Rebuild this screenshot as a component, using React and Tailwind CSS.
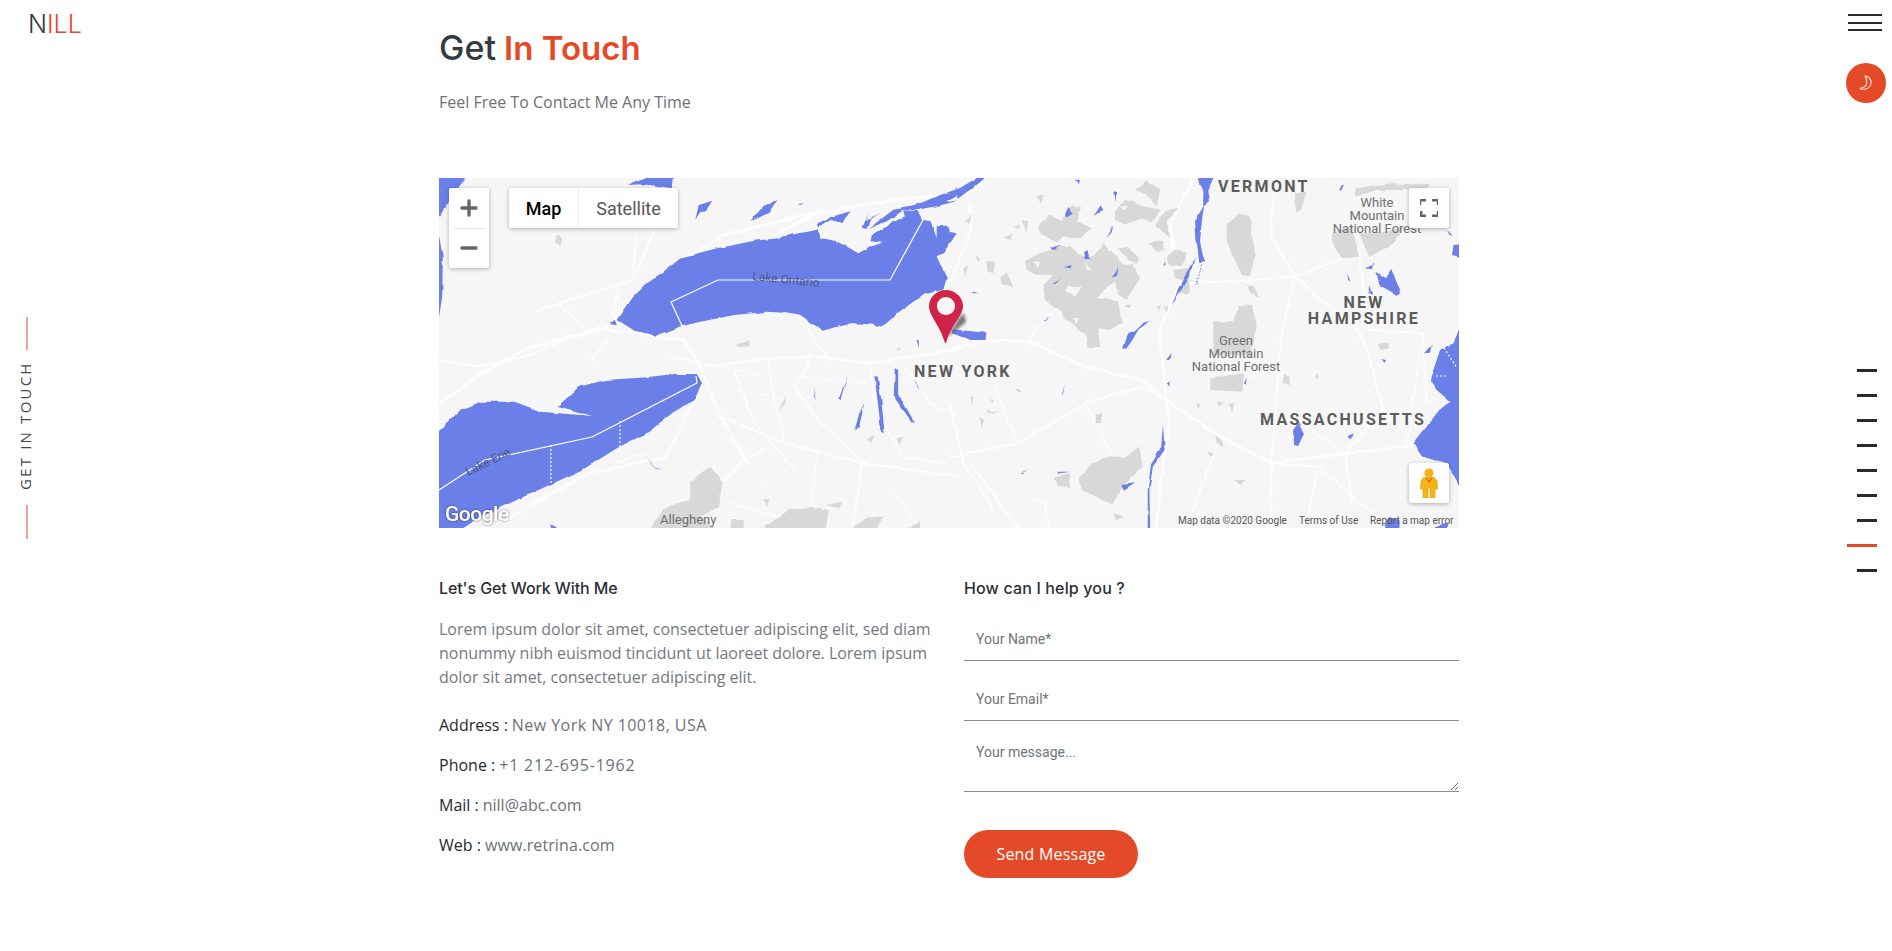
import { Plus, Minus } from 'lucide-react';

const water = "#6b80e8";
const forest = "#d8d8d8";
const land = "#f6f6f6";

// shapes are traced in zoomed-crop coordinates, each group maps its crop back onto the map
function MapLeft() {
  return (
    <g transform="translate(-9,-8) scale(0.338,0.33333)">
      <g fill="none" stroke="#ffffff" strokeOpacity="0.8" strokeLinecap="round" strokeLinejoin="round">
        <path strokeWidth="9" d="M27 700 L150 612 L300 530 L530 472 L600 390 L700 300" />
        <path strokeWidth="9" d="M700 300 L870 195 L1150 125" />
        <path strokeWidth="8" d="M820 590 L1000 565 L1150 560 L1300 580 L1525 545 L1568 540" />
        <path strokeWidth="8" d="M530 480 L750 510 L800 590 L820 640 L860 740 L940 880" />
        <path strokeWidth="6" d="M27 570 L150 590 L280 560 L500 470" />
        <path strokeWidth="6" d="M320 420 L380 400 L600 330 L660 190 L650 25" />
        <path strokeWidth="5" d="M380 400 L450 470 M560 345 L540 430 M610 200 L600 320 M480 570 L530 500" />
        <path strokeWidth="6" d="M805 640 L700 860 L470 910 L300 1000" />
        <path strokeWidth="6" d="M1130 560 L1080 650 L1130 730 L1280 880 L1250 1073" />
        <path strokeWidth="6" d="M860 740 L1050 820 L1280 880 L1568 920" />
        <path strokeWidth="5" d="M1120 480 L1180 570 M840 960 L920 880 L1000 830 M1000 565 L1020 700 L1050 820" />
        <path strokeWidth="4" d="M240 1040 L460 920 M540 880 L640 850 M880 1000 L1030 1040 M900 600 L960 760 L1080 900 M1300 580 L1320 720 L1400 860 L1520 880 M1400 580 L1480 700 L1568 740" />
        <path strokeWidth="3" d="M1100 620 L1300 640 M900 660 L1060 690 M880 800 L1000 950 M1150 800 L1130 1000 M1350 940 L1450 1073 M700 560 L1000 620" />
      </g>
      <g fill={forest}>
        <path d="M770 935 L830 890 L865 935 L855 1010 L800 1040 L850 1080 L650 1080 L690 1020 L730 1000 L770 990 Z" />
        <path d="M980 1080 L1060 1020 L1130 1010 L1180 1020 L1170 1080 Z" />
        <path d="M890 1080 L895 1050 L925 1050 L925 1080 Z" />
        <path d="M1240 1080 L1300 1040 L1340 1040 L1320 1080 Z" />
        <path d="M1400 1080 L1450 1055 L1450 1080 Z" />
        <path d="M1120 1015 L1160 1010 L1165 1025 L1125 1028 Z" />
        <path d="M1170 1005 L1220 995 L1210 1015 Z" />
        <path d="M905 525 L945 510 L945 528 L915 532 Z" />
        <path d="M1025 725 L1055 675 L1050 700 Z" />
        <path d="M1290 805 L1315 795 L1305 820 Z" />
        <path d="M1380 805 L1400 800 L1390 825 Z" />
        <path d="M985 985 L1000 985 L998 1010 Z" />
        <path d="M372 195 L388 205 L384 230 L370 220 Z" />
      </g>
      <g fill={water}>
        <path d="M555 450 L600 382 L640 342 L700 298 L745 262 L850 235 L960 212 L1045 203 L1045 428 L1000 425 L900 435 L800 455 L740 470 L670 497 L605 482 Z" />
        <path d="M530 462 L550 452 L552 466 Z" />
        <path d="M20 790 L90 720 L150 695 L250 695 L330 725 L480 738 L378 708 L410 680 L440 650 L520 630 L640 622 L720 612 L790 612 L805 640 L780 690 L720 730 L650 785 L560 830 L450 900 L300 970 L150 1040 L90 1080 L20 1080 Z" />
        <path d="M20 15 L110 15 L60 90 L27 140 L20 140 Z" />
        <path d="M20 160 L38 260 L36 380 L27 440 L20 440 Z" />
        <path d="M585 48 L660 15 L722 15 L718 55 L650 45 Z" />
        <path d="M785 150 L795 105 L835 92 L815 125 L800 125 Z" />
        <path d="M948 155 L980 115 L1028 90 L1000 130 Z" />
        <path d="M1135 650 L1145 690 L1140 680 Z" />
        <path d="M1235 620 L1215 690 L1208 690 Z" />
        <path d="M1315 618 L1325 620 L1335 690 L1345 790 L1335 785 L1325 700 Z" />
        <path d="M1375 595 L1385 600 L1385 670 L1435 760 L1425 755 L1372 680 Z" />
        <path d="M1285 700 L1270 770 L1255 785 L1270 730 Z" />
        <path d="M635 848 L665 895 L690 900 L660 890 Z" />
        <path d="M355 1060 L385 1080 L360 1080 Z" />
        <path d="M1432 628 L1448 655 L1440 650 Z" />
        <path d="M1442 515 L1447 530 L1444 530 Z" />
      </g>
    </g>
  );
}

function LakeEast() {
  return (
    <g transform="translate(341,0) scale(0.33333)">
      <g fill="none" stroke="#ffffff" strokeOpacity="0.8" strokeLinecap="round" strokeLinejoin="round">
        <path strokeWidth="9" d="M0 160 L100 110 L250 80 L400 60 L560 48 L612 5" />
        <path strokeWidth="8" d="M570 80 L575 150 L530 270 L505 320" />
      </g>
      <path fill={water} d="M0 178 L60 165 L112 155 L125 180 L170 190 L212 212 L235 226 L270 206 L308 194 L272 190 L276 168 L320 146 L370 100 L412 98 L425 125 L452 130 L470 180 L470 145 L505 143 L510 165 L530 170 L510 195 L490 225 L470 235 L490 280 L500 300 L490 335 L430 350 L360 400 L320 435 L290 447 L282 440 L215 435 L128 458 L60 410 L0 400 Z" />
      <g fill={water}>
        <path d="M110 140 L150 118 L212 100 L185 135 L150 125 L115 148 Z" />
        <path d="M245 150 L268 96 L255 132 L302 103 L272 125 L260 152 Z" />
        <path d="M265 152 L340 95 L400 85 L470 55 L540 30 L590 0 L612 0 L570 35 L520 72 L470 85 L415 96 L370 98 L320 130 Z" />
        <path d="M55 78 L72 75 L60 82 Z M408 488 L416 490 L416 505 Z M575 340 L595 346 L580 346 Z" />
      </g>
      <path fill={land} d="M330 125 L368 98 L375 115 L345 130 Z M415 100 L450 88 L458 92 L430 122 Z M500 68 L530 52 L540 60 L510 72 Z" />
      <g fill={forest}>
        <path d="M552 130 L575 112 L568 138 Z M550 270 L565 265 L555 298 Z M585 230 L600 240 L595 255 Z M620 250 L645 250 L640 285 L618 280 Z M350 515 L365 510 L355 520 Z" />
      </g>
    </g>
  );
}

function Adirondacks() {
  return (
    <g transform="translate(561,0) scale(0.33333)">
      <g fill={forest}>
        <path d="M75 250 L120 225 L155 215 L180 200 L215 205 L240 235 L280 235 L310 195 L345 230 L370 260 L400 260 L420 300 L380 365 L355 350 L345 310 L320 330 L290 360 L355 370 L365 435 L330 455 L295 450 L300 510 L265 510 L260 470 L190 420 L185 400 L135 370 L130 320 L160 290 L110 290 L80 275 Z" />
        <path d="M115 145 L150 110 L185 125 L215 85 L240 90 L230 130 L275 150 L240 180 L190 175 L170 195 L120 165 Z" />
        <path d="M345 100 L375 65 L430 85 L480 95 L455 130 L420 120 L375 140 L345 125 Z" />
        <path d="M405 35 L440 10 L480 40 L470 85 L440 50 Z" />
        <path d="M465 135 L500 95 L535 90 L500 130 L510 180 L465 140 Z" />
        <path d="M445 195 L490 190 L495 215 L470 225 Z" />
        <path d="M355 215 L385 210 L418 240 L410 258 L380 240 Z" />
        <path d="M500 235 L525 215 L560 225 L545 265 L505 260 Z" />
        <path d="M520 275 L565 270 L570 345 L540 345 L550 310 L525 300 Z" />
        <path d="M680 140 L720 105 L750 120 L765 230 L750 295 L725 290 L680 190 Z" />
        <path d="M640 430 L700 430 L715 380 L755 380 L770 440 L750 530 L640 530 Z" />
        <path d="M10 175 L40 165 L35 185 Z M40 145 L62 140 L55 158 Z M65 125 L85 130 L80 165 Z M110 55 L132 50 L122 75 Z M0 300 L20 280 L40 325 L10 320 Z M375 380 L395 380 L385 392 Z M465 385 L482 382 L478 400 Z M490 385 L505 385 L500 400 Z" />
      </g>
      <path fill={land} d="M205 320 L245 330 L225 360 L195 340 Z M100 255 L120 250 L115 270 Z M215 420 L235 420 L225 440 Z M360 85 L385 85 L370 98 Z M255 250 L275 280 L265 275 Z" />
      <g fill={water}>
        <path d="M595 0 L640 0 L625 35 L630 70 L612 85 L606 125 L600 190 L612 250 L598 255 L590 190 L585 130 L610 85 L610 40 Z" />
        <path d="M516 385 L535 330 L585 238 L570 290 L540 340 Z" />
        <path d="M368 510 L385 468 L405 460 L430 435 L450 428 L415 455 L395 490 L378 513 Z" />
        <path d="M225 5 L240 5 L236 22 Z M340 42 L348 40 L348 72 Z M195 112 L205 90 L218 108 L200 118 Z M283 110 L300 80 L310 95 L292 105 Z M318 178 L342 140 L335 160 Z M150 212 L180 198 L162 216 Z M250 225 L262 215 L268 240 L252 240 Z M192 265 L215 258 L212 268 Z M335 298 L355 268 L350 295 Z M155 322 L185 298 L170 315 Z M130 427 L148 415 L138 426 Z M500 540 L512 525 L508 540 Z M490 262 L496 250 L496 262 Z" />
      </g>
      <path fill="none" stroke={water} strokeWidth="3" strokeDasharray="5 5" d="M605 260 L595 300 L590 325" />
    </g>
  );
}

function MapRight() {
  return (
    <g transform="translate(511,-8) scale(0.338,0.33333)">
      <g fill="none" stroke="#ffffff" strokeOpacity="0.8" strokeLinecap="round" strokeLinejoin="round">
        <path strokeWidth="8" d="M0 540 L120 510 L230 515 L400 590 L570 630 L640 690 L800 800 L950 880 L1170 850 L1350 830 L1500 800" />
        <path strokeWidth="8" d="M640 690 L650 760 L630 880 L610 1073" />
        <path strokeWidth="8" d="M640 690 L620 480 L680 340 L650 160 L720 25" />
        <path strokeWidth="6" d="M0 860 L200 820 L400 700 L570 650 L640 690" />
        <path strokeWidth="6" d="M1020 320 L950 200 L960 25 M1020 320 L980 500 L950 880 L950 1073" />
        <path strokeWidth="6" d="M1020 320 L1110 400 L1210 480 L1240 560 L1280 720 L1170 850 L1190 1000" />
        <path strokeWidth="6" d="M1210 250 L1240 480 L1400 490 M1020 320 L1200 250 M1400 490 L1410 700" />
        <path strokeWidth="6" d="M0 700 L40 880 L130 1020 M60 880 L200 1073 M230 515 L260 470 L300 430" />
        <path strokeWidth="5" d="M950 880 L1090 890 L1300 1073 M800 800 L700 1073 M700 340 L900 330 L1020 320" />
        <path strokeWidth="4" d="M230 980 L280 1000 L295 1073 M1050 1073 L1090 890 M400 700 L500 900 M130 640 L200 820 M1170 850 L1010 740 M1400 490 L1350 830 M800 640 L980 600" />
      </g>
      <g fill={forest}>
        <path d="M1130 190 L1190 170 L1210 260 L1160 265 L1130 220 Z" />
        <path d="M1195 55 L1310 40 L1420 45 L1395 70 L1355 60 L1260 60 L1200 80 Z" />
        <path d="M1210 190 L1280 190 L1350 170 L1300 230 L1240 260 Z" />
        <path d="M380 925 L420 880 L480 860 L520 860 L560 830 L570 890 L510 950 L480 1005 L430 980 L390 960 Z" />
        <path d="M310 920 L350 910 L355 950 L320 950 Z" />
        <path d="M1020 70 L1055 65 L1040 115 L1025 125 Z" />
        <path d="M1265 520 L1295 518 L1295 535 L1275 540 Z" />
        <path d="M985 615 L1005 620 L1005 645 L985 640 Z" />
        <path d="M770 625 L870 610 L865 665 L770 660 Z" />
        <path d="M875 340 L900 350 L915 385 L890 370 Z" />
        <path d="M428 735 L450 730 L450 760 L435 760 Z" />
        <path d="M785 800 L805 810 L810 830 L790 820 Z" />
        <path d="M760 845 L778 850 L775 865 Z" />
        <path d="M788 690 L808 700 L795 710 Z M825 700 L840 700 L835 725 Z M725 700 L740 700 L735 715 Z" />
        <path d="M60 680 L70 680 L65 705 Z M115 680 L130 690 L125 695 Z M105 720 L145 725 L110 730 Z M85 745 L100 750 L90 775 Z" />
        <path d="M190 655 L210 660 L205 668 Z M1085 610 L1095 625 L1080 625 Z M485 1030 L515 1040 L490 1050 Z M840 930 L875 930 L860 945 Z" />
      </g>
      <g fill={water}>
        <path d="M8 478 L108 488 L105 510 L60 510 L5 490 Z" />
        <path d="M1262 305 L1290 325 L1305 300 L1332 360 L1322 375 L1270 345 Z" />
        <path d="M1490 225 L1520 222 L1520 263 L1485 255 Z" />
        <path d="M1228 295 L1252 278 L1248 298 Z" />
        <path d="M1520 440 L1490 520 L1450 540 L1420 630 L1440 660 L1480 695 L1440 730 L1410 770 L1372 820 L1400 860 L1470 880 L1520 970 Z" />
        <path d="M1402 550 L1425 525 L1420 548 Z" />
        <path d="M1278 568 L1290 570 L1285 580 Z" />
        <path d="M1015 780 L1030 760 L1048 790 L1030 828 L1018 825 Z" />
        <path d="M1172 800 L1195 790 L1185 808 Z" />
        <path d="M630 765 L635 840 L600 890 L590 960 L592 1080 L585 1080 L585 960 L595 880 L625 830 Z" />
        <path d="M320 905 L355 905 L325 910 Z M505 945 L548 940 L515 962 Z M208 912 L232 898 L215 912 Z" />
        <path d="M330 680 L340 640 L335 670 Z M640 570 L652 550 L648 570 Z M645 640 L652 635 L652 650 Z" />
        <path d="M870 640 L878 622 L875 645 Z M1470 180 L1488 198 L1478 195 Z" />
        <path d="M1240 350 L1250 375 L1238 370 Z M1175 310 L1185 335 L1178 330 Z" />
        <path d="M1285 1080 L1300 1040 L1330 1050 L1330 1080 Z M1410 1080 L1470 1060 L1470 1080 Z M1150 60 L1170 42 L1160 62 Z" />
      </g>
    </g>
  );
}

// country borders stay straight, they sit above the wobbled shapes
function MapLines() {
  return (
    <g fill="none" stroke="#ffffff" strokeLinejoin="round">
      <path strokeWidth="1.2" d="M0 312 L46 282 L153 259 L258 205 L257 198" />
      <path strokeWidth="1.2" d="M244 150 L232 124 L279 102 L451 102 L484 42" />
      <path strokeWidth="1.2" strokeDasharray="2 2" d="M112 267 L112 307 M181 243 L181 269" />
      <path strokeWidth="1.2" strokeDasharray="2 2" d="M1005 170 L1018 190 M997 198 L1008 198" />
    </g>
  );
}

function Pin() {
  return (
    <g>
      <path d="M508 160 L520 140 L525 135 L527 144 L516 153 Z" fill="#555555" opacity="0.8" className="blur-[1.5px]" />
      <path fillRule="evenodd" fill="#d0234a" d="M507 112 C498 112 490 119 490 128 C490 138 501 147 506 165 L507 165 C512 147 524 138 524 128 C524 119 516 112 507 112 Z M507 119 C502 119 498 123 498 128 C498 133 502 137 507 137 C512 137 516 133 516 128 C516 123 512 119 507 119 Z" />
    </g>
  );
}

function MapPanel() {
  const bold = "font-['Roboto',sans-serif] text-[16px] font-bold fill-[#5c5c5c] tracking-[2.3px]";
  const thin = "font-['Roboto',sans-serif] text-[13px] fill-[#6f6f6f]";
  return (
    <div className="relative w-full h-[350px] overflow-hidden bg-[#f6f6f6]">
      <svg viewBox="0 0 1020 350" className="block w-full h-full">
        <defs>
          <filter id="wobble" x="-2%" y="-2%" width="104%" height="104%">
            <feTurbulence type="fractalNoise" baseFrequency="0.08" numOctaves="2" seed="4" result="noise" />
            <feDisplacementMap in="SourceGraphic" in2="noise" scale="3.5" xChannelSelector="R" yChannelSelector="G" />
            <feGaussianBlur stdDeviation="0.35" />
          </filter>
        </defs>
        <g filter="url(#wobble)">
          <MapLeft />
          <MapRight />
          <LakeEast />
          <Adirondacks />
        </g>
        <MapLines />
        <text x="475" y="199" className={bold}>NEW YORK</text>
        <text x="779" y="14" className={bold}>VERMONT</text>
        <text x="925" y="130" textAnchor="middle" className={bold}>NEW</text>
        <text x="925" y="146" textAnchor="middle" className={bold}>HAMPSHIRE</text>
        <text x="821" y="247" className={bold}>MASSACHUSETTS</text>
        <text x="797" y="167" textAnchor="middle" className={thin}>Green</text>
        <text x="797" y="180" textAnchor="middle" className={thin}>Mountain</text>
        <text x="797" y="193" textAnchor="middle" className={thin}>National Forest</text>
        <text x="938" y="29" textAnchor="middle" className={thin}>White</text>
        <text x="938" y="42" textAnchor="middle" className={thin}>Mountain</text>
        <text x="938" y="55" textAnchor="middle" className={thin}>National Forest</text>
        <text x="221" y="346" className={thin}>Allegheny</text>
        <text x="313" y="102" transform="rotate(6 313 102)" className="font-['Roboto',sans-serif] text-[12px] fill-[#4c5a86]">Lake Ontario</text>
        <text x="29" y="298" transform="rotate(-26 29 298)" className="font-['Roboto',sans-serif] text-[12px] fill-[#4c5a86]">Lake Erie</text>
        <Pin />
        <text x="6" y="343" className="font-['Roboto',sans-serif] text-[21px] font-medium fill-white tracking-[-0.5px] [filter:drop-shadow(0_0_1px_rgba(0,0,0,0.55))]">Google</text>
        <g className="font-['Roboto',sans-serif] text-[10px] fill-[#555555]">
          <text x="739" y="346">Map data ©2020 Google</text>
          <text x="860" y="346">Terms of Use</text>
          <text x="931" y="346">Report a map error</text>
        </g>
      </svg>

      {/* controls over the map */}
      <div className="absolute left-[10px] top-[10px] w-10 h-20 bg-white shadow-[0_1px_4px_rgba(0,0,0,0.3)] rounded-[2px] flex flex-col items-center text-[#666666]">
        <div className="h-10 w-full flex items-center justify-center"><Plus size={24} strokeWidth={3.4} /></div>
        <div className="w-[30px] h-px bg-[#e6e6e6]"></div>
        <div className="h-10 w-full flex items-center justify-center"><Minus size={24} strokeWidth={3.4} /></div>
      </div>
      <div className="absolute left-[70px] top-[10px] h-10 w-[169px] bg-white shadow-[0_1px_4px_rgba(0,0,0,0.3)] rounded-[2px] flex font-['Roboto',sans-serif] text-[18px]">
        <div className="w-[70px] flex items-center justify-center text-black border-r border-[#eeeeee] font-medium">Map</div>
        <div className="flex-1 flex items-center justify-center text-[#565656]">Satellite</div>
      </div>
      <div className="absolute right-[10px] top-[10px] w-10 h-10 bg-white shadow-[0_1px_4px_rgba(0,0,0,0.3)] rounded-[2px] flex items-center justify-center">
        <svg width="18" height="18" viewBox="0 0 18 18" fill="none" stroke="#666666" strokeWidth="2.4">
          <path d="M0 6V1.2H6M12 1.2H18V6M18 12V16.8H12M6 16.8H1.2V12" />
        </svg>
      </div>
      <div className="absolute right-[10px] top-[285px] w-10 h-10 bg-white shadow-[0_1px_4px_rgba(0,0,0,0.3)] rounded-[2px] flex items-center justify-center">
        <svg width="18" height="30" viewBox="0 0 18 30">
          <circle cx="9" cy="5" r="4.6" fill="#f5b316" />
          <path d="M3.5 9.5H14.5L17 13L17.5 21H15V30H10V20H8V30H3V21H0.5L1 13Z" fill="#f5b316" stroke="#d99a0c" strokeWidth="0.6" />
          <path d="M6 10L9 14L12 10" fill="none" stroke="#e2562a" strokeWidth="1.2" />
        </svg>
      </div>
    </div>
  );
}

function ContactLine({ label, value, valueClass = "" }) {
  return (
    <p className="h-10 flex items-center gap-[4px] text-[16px]">
      <span className="font-medium text-[#26292e]">{label} :</span>
      <span className={`text-[#6c7178] ${valueClass}`}>{value}</span>
    </p>
  );
}

export default function App() {
  const head = "font-['Inter',sans-serif]";
  const body = "font-['Open_Sans',sans-serif]";
  const field = "w-full border-b border-[#8b8b8b] px-3 outline-none bg-transparent text-[14px] font-['Roboto',sans-serif] placeholder:text-[#6f757c]";

  return (
    <div className={`h-screen overflow-hidden bg-white flex ${body}`}>
      {/* left rail */}
      <div className="w-[439px] shrink-0">
        <div className={`pl-[28px] pt-[8px] text-[25px] leading-[32px] ${head} font-light`}>
          <span className="text-[#333a42]">N</span><span className="text-[#e44a27]">ILL</span>
        </div>
        <div className="mt-[277px] ml-[26px] w-px flex flex-col items-center">
          <div className="w-[2px] h-[33px] shrink-0 bg-[#e8a598]"></div>
          <div className="mt-[11px] h-[130px] shrink-0 [writing-mode:vertical-rl] rotate-180 text-[15px] leading-none tracking-[2.2px] text-[#444a52] whitespace-nowrap text-center -translate-x-[1px]">GET IN TOUCH</div>
          <div className="mt-[14px] w-[2px] h-[34px] shrink-0 bg-[#e8a598]"></div>
        </div>
      </div>

      {/* page content */}
      <div className="w-[1020px] shrink-0">
        <h1 className={`pt-[25px] text-[34px] leading-[46px] font-medium text-[#333a42] ${head}`}>
          Get <span className="-ml-[1px] text-[33px] font-semibold text-[#e44a27]">In Touch</span>
        </h1>
        <p className="mt-[19px] text-[16px] leading-[24px] text-[#6c7178]">Feel Free To Contact Me Any Time</p>
        <div className="mt-[64px]"><MapPanel /></div>

        <div className="mt-[48px] flex">
          <div className="w-[525px] pr-[30px]">
            <h3 className={`text-[16px] leading-6 font-medium text-[#2b2f36] tracking-[-0.1px] ${head}`}>Let's Get Work With Me</h3>
            <p className="mt-[17px] text-[16px] leading-6 text-[#75797f] tracking-[-0.03px]">
              Lorem ipsum dolor sit amet, consectetuer adipiscing elit, sed diam nonummy nibh euismod tincidunt ut laoreet dolore. Lorem ipsum dolor sit amet, consectetuer adipiscing elit.
            </p>
            <div className="mt-[16px]">
              <ContactLine label="Address" value="New York NY 10018, USA" valueClass="tracking-[0.45px]" />
              <ContactLine label="Phone" value="+1 212-695-1962" valueClass="tracking-[0.8px]" />
              <ContactLine label="Mail" value="nill@abc.com" />
              <ContactLine label="Web" value="www.retrina.com" valueClass="tracking-[0.1px]" />
            </div>
          </div>
          <div className="flex-1">
            <h3 className={`text-[16px] leading-6 font-medium text-[#2b2f36] tracking-[0.15px] ${head}`}>How can I help you ?</h3>
            <input className={`mt-[17px] h-[44px] ${field}`} placeholder="Your Name*" />
            <input className={`mt-[15px] h-[45px] pt-[2px] ${field}`} placeholder="Your Email*" />
            <textarea className={`mt-[15px] block h-[56px] pt-[6px] resize-y ${field}`} placeholder="Your message..."></textarea>
            <button className="mt-[38px] w-[174px] h-12 rounded-full bg-[#e44a27] text-white text-[16px] tracking-[0.2px]">Send Message</button>
          </div>
        </div>
      </div>

      {/* right rail */}
      <div className="flex-1 flex flex-col items-end">
        <div className="mt-[14px] mr-[10px] w-[34px] flex flex-col gap-[5.5px]">
          <div className="h-[2px] bg-[#2b2b2b]"></div>
          <div className="h-[2px] bg-[#2b2b2b]"></div>
          <div className="h-[2px] bg-[#2b2b2b]"></div>
        </div>
        <div className="mt-[32px] mr-[6px] w-10 h-10 rounded-full bg-[#e44a27] flex items-center justify-center">
          <svg width="16" height="16" viewBox="0 0 16 16" fill="none" stroke="#ffe9df" strokeWidth="1.1" strokeLinejoin="round">
            <path d="M7.5 1C11 1.5 13.5 4.5 13 8.5C12.5 12.5 8.5 15 3 14C2.2 13.9 1.8 13.2 3 13C6.5 12.6 8.5 10.5 8.8 7.5C9 5 8.3 3 7.2 1.6C7 1.2 7.2 1 7.5 1Z" />
          </svg>
        </div>
        <div className="mt-[266px] mr-[15px] flex flex-col items-end gap-[22.5px]">
          <div className="w-5 h-[2.5px] bg-[#2b2b2b]"></div>
          <div className="w-5 h-[2.5px] bg-[#2b2b2b]"></div>
          <div className="w-5 h-[2.5px] bg-[#2b2b2b]"></div>
          <div className="w-5 h-[2.5px] bg-[#2b2b2b]"></div>
          <div className="w-5 h-[2.5px] bg-[#2b2b2b]"></div>
          <div className="w-5 h-[2.5px] bg-[#2b2b2b]"></div>
          <div className="w-5 h-[2.5px] bg-[#2b2b2b]"></div>
          <div className="w-[30px] h-[2.5px] bg-[#e44a27]"></div>
          <div className="w-5 h-[2.5px] bg-[#2b2b2b]"></div>
        </div>
      </div>
    </div>
  );
}
